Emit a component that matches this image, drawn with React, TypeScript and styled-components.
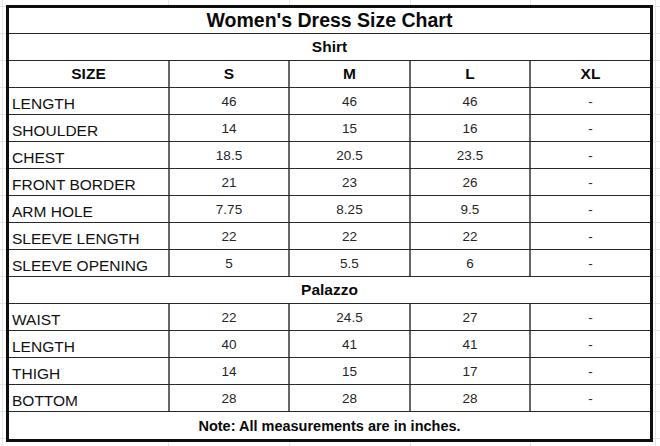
import React from 'react';
import styled, { createGlobalStyle } from 'styled-components';

const GlobalStyle = createGlobalStyle`
  html, body {
    margin: 0;
    background: #fff;
  }
  body {
    font-family: "Liberation Sans", Arial, sans-serif;
    color: #111;
  }
`;

// faint spreadsheet gridlines behind the chart
const Sheet = styled.div`
  width: 660px;
  height: 446px;
  box-sizing: border-box;
  padding: 5px 0 0 6px;
  overflow: hidden;
  background-color: #fff;
  background-image:
    linear-gradient(90deg, transparent 2px, #e6e6e6 2px, #e6e6e6 3px, transparent 3px),
    linear-gradient(90deg, transparent 168px, #e6e6e6 168px, #e6e6e6 169px, transparent 169px),
    linear-gradient(90deg, transparent 289px, #e6e6e6 289px, #e6e6e6 290px, transparent 290px),
    linear-gradient(90deg, transparent 410px, #e6e6e6 410px, #e6e6e6 411px, transparent 411px),
    linear-gradient(90deg, transparent 530px, #e6e6e6 530px, #e6e6e6 531px, transparent 531px),
    linear-gradient(90deg, transparent 655px, #e6e6e6 655px, #e6e6e6 656px, transparent 656px),
    repeating-linear-gradient(180deg, transparent 0, transparent 6px, #e6e6e6 6px, #e6e6e6 7px, transparent 7px, transparent 27px);
`;

const Chart = styled.div`
  width: 647px;
  box-sizing: border-box;
  border: 3px solid #0e0e0e;
  background: #fff;
  display: flex;
  flex-direction: column;
`;

const Banner = styled.div<{ $size: number; $height: number; $last?: boolean }>`
  height: ${(p) => p.$height}px;
  box-sizing: border-box;
  display: flex;
  align-items: center;
  justify-content: center;
  font-weight: 700;
  font-size: ${(p) => p.$size}px;
  color: #0a0a0a;
  border-bottom: ${(p) => (p.$last ? 'none' : '1px solid #2a2a2a')};
`;

const Row = styled.div`
  display: grid;
  grid-template-columns: 161px 120px 121px 120px 1fr;
  height: 27px;
  box-sizing: border-box;
  border-bottom: 1px solid #2a2a2a;
`;

const Cell = styled.div`
  display: flex;
  align-items: center;
  justify-content: center;
  border-right: 2px solid #666;
  &:last-child {
    border-right: none;
  }
`;

const Head = styled(Cell)`
  font-weight: 700;
  font-size: 15.5px;
  color: #0a0a0a;
`;

const Label = styled(Cell)`
  justify-content: flex-start;
  align-items: flex-end;
  padding: 0 0 1px 3px;
  font-size: 15.5px;
  color: #111;
`;

const Value = styled(Cell)`
  font-size: 13.5px;
  color: #262626;
`;

type Measure = [string, string, string, string, string];

const shirt: Measure[] = [
  ['LENGTH', '46', '46', '46', '-'],
  ['SHOULDER', '14', '15', '16', '-'],
  ['CHEST', '18.5', '20.5', '23.5', '-'],
  ['FRONT BORDER', '21', '23', '26', '-'],
  ['ARM HOLE', '7.75', '8.25', '9.5', '-'],
  ['SLEEVE LENGTH', '22', '22', '22', '-'],
  ['SLEEVE OPENING', '5', '5.5', '6', '-'],
];

const palazzo: Measure[] = [
  ['WAIST', '22', '24.5', '27', '-'],
  ['LENGTH', '40', '41', '41', '-'],
  ['THIGH', '14', '15', '17', '-'],
  ['BOTTOM', '28', '28', '28', '-'],
];

function MeasureRow({ row }: { row: Measure }) {
  const [name, ...values] = row;
  return (
    <Row>
      <Label>{name}</Label>
      {values.map((v, i) => (
        <Value key={i}>{v}</Value>
      ))}
    </Row>
  );
}

export default function App() {
  return (
    <>
      <GlobalStyle />
      <Sheet>
        <Chart>
          <Banner $size={19.5} $height={26}>
            Women's Dress Size Chart
          </Banner>
          <Banner $size={15.5} $height={27}>
            Shirt
          </Banner>
          <Row>
            {['SIZE', 'S', 'M', 'L', 'XL'].map((h) => (
              <Head key={h}>{h}</Head>
            ))}
          </Row>
          {shirt.map((r, i) => (
            <MeasureRow key={'s' + i} row={r} />
          ))}
          <Banner $size={15.5} $height={27}>
            Palazzo
          </Banner>
          {palazzo.map((r, i) => (
            <MeasureRow key={'p' + i} row={r} />
          ))}
          <Banner $size={14.5} $height={27} $last>
            Note: All measurements are in inches.
          </Banner>
        </Chart>
      </Sheet>
    </>
  );
}
